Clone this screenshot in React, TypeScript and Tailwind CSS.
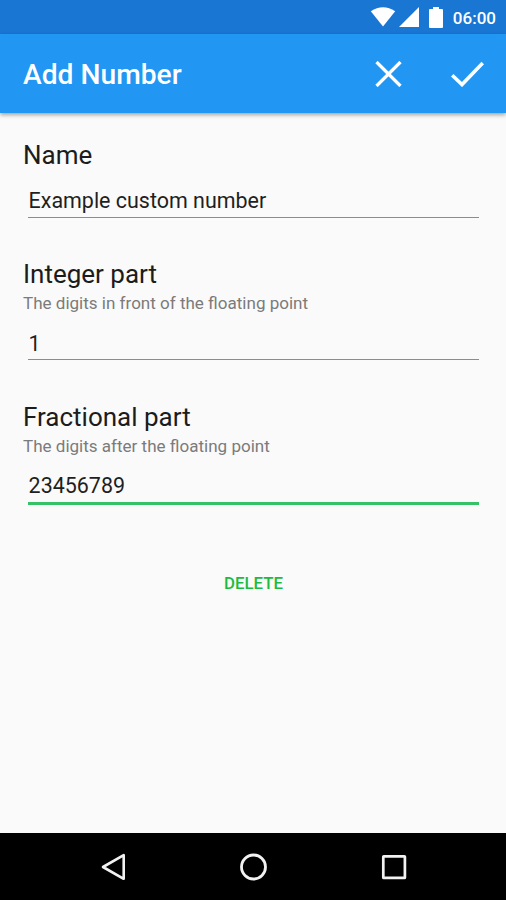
import React, { useState } from "react";

type FieldProps = {
  label: string;
  hint?: string;
  value: string;
  active?: boolean;
  className?: string;
  onChange: (value: string) => void;
};

const Field: React.FC<FieldProps> = ({
  label,
  hint,
  value,
  active,
  className,
  onChange,
}) => {
  return (
    <label className={`block ${className ?? ""}`}>
      <span className="block text-[26px] leading-[34px] text-[#1c1c1c]">
        {label}
      </span>
      {hint && (
        <span className="block text-[17.05px] leading-6 text-[#7b7b7b]">
          {hint}
        </span>
      )}
      <input
        className={`block ml-[5px] w-[451px] rounded-none bg-transparent pl-[0.6px] outline-none text-[21.45px] text-[#1f1f1f] ${
          hint ? "mt-[13px]" : "mt-[14px]"
        } ${
          active
            ? "h-[34px] border-b-3 border-[#35c165] pb-[2px]"
            : "h-[32px] border-b border-[#8c8c8c]"
        } ${hint && !active ? "pt-[2px]" : ""}`}
        value={value}
        onChange={(e) => onChange(e.target.value)}
      />
    </label>
  );
};

const StatusBar: React.FC = () => {
  return (
    <div className="flex h-[34px] shrink-0 items-center justify-end bg-[#1976d2] pr-[10px] text-white">
      {/* wifi */}
      <svg className="mr-[3px]" width="26" height="20" viewBox="0 0 26 20">
        <path d="M0.8 4.2Q13 -3.6 25.2 4.2L13 19.5Z" fill="currentColor" />
      </svg>
      {/* signal */}
      <svg className="mr-[10px]" width="20" height="20" viewBox="0 0 20 20">
        <path d="M20 0V20H0Z" fill="currentColor" />
      </svg>
      {/* battery */}
      <svg className="mr-[10px]" width="14" height="21" viewBox="0 0 14 21">
        <path
          d="M4 0h6v2h3q1 0 1 1v17q0 1-1 1H1q-1 0-1-1V3q0-1 1-1h3z"
          fill="currentColor"
        />
      </svg>
      <span className="mt-0.5 text-[17px] font-medium leading-5">06:00</span>
    </div>
  );
};

const App: React.FC = () => {
  const [name, setName] = useState("Example custom number");
  const [integer, setInteger] = useState("1");
  const [fraction, setFraction] = useState("23456789");

  return (
    <div className="flex h-[900px] w-[506px] flex-col overflow-hidden bg-[#fafafa] font-['Roboto',sans-serif]">
      <StatusBar />

      {/* toolbar */}
      <header className="flex h-[79px] shrink-0 items-center bg-[#2196f3] pl-[23px] pr-[22px] text-white shadow-[0_2px_4px_rgba(0,0,0,0.35)]">
        <h1 className="flex-1 pt-1 text-[28.2px] font-medium">Add Number</h1>
        <button className="mr-[49px]" aria-label="Cancel">
          <svg width="27" height="26" viewBox="0 0 27 26" fill="none">
            <path
              d="M1.5 1L25.5 25M25.5 1L1.5 25"
              stroke="currentColor"
              strokeWidth="3.3"
            />
          </svg>
        </button>
        <button aria-label="Save">
          <svg width="33" height="26" viewBox="0 0 33 26" fill="none">
            <path
              d="M1.2 14.2L11 23.6L31.8 2"
              stroke="currentColor"
              strokeWidth="3.6"
            />
          </svg>
        </button>
      </header>

      <main className="flex flex-1 flex-col px-[23px] pt-[25px]">
        <Field label="Name" value={name} onChange={setName} />
        <Field
          className="mt-[39px]"
          label="Integer part"
          hint="The digits in front of the floating point"
          value={integer}
          onChange={setInteger}
        />
        <Field
          className="mt-[40px]"
          label="Fractional part"
          hint="The digits after the floating point"
          value={fraction}
          active
          onChange={setFraction}
        />
        <button className="mt-[66px] self-center pl-px text-[16.8px] font-medium leading-6 text-[#1cbb40]">
          DELETE
        </button>
      </main>

      {/* navigation bar */}
      <nav className="flex h-[67px] shrink-0 items-center justify-between bg-black pl-[101px] pr-[98px] text-[#f2f2f2]">
        <svg width="25" height="28" viewBox="0 0 25 28" fill="none">
          <path
            d="M22.7 2.2V25.8L2 14Z"
            stroke="currentColor"
            strokeWidth="2.6"
            strokeLinejoin="round"
          />
        </svg>
        <svg width="28" height="28" viewBox="0 0 28 28" fill="none">
          <circle cx="14.5" cy="14" r="12" stroke="currentColor" strokeWidth="2.8" />
        </svg>
        <svg width="28" height="28" viewBox="0 0 28 28" fill="none">
          <rect
            x="3.3"
            y="3.3"
            width="21.6"
            height="21.6"
            rx="0.5"
            stroke="currentColor"
            strokeWidth="2.7"
          />
        </svg>
      </nav>
    </div>
  );
};

export default App;
